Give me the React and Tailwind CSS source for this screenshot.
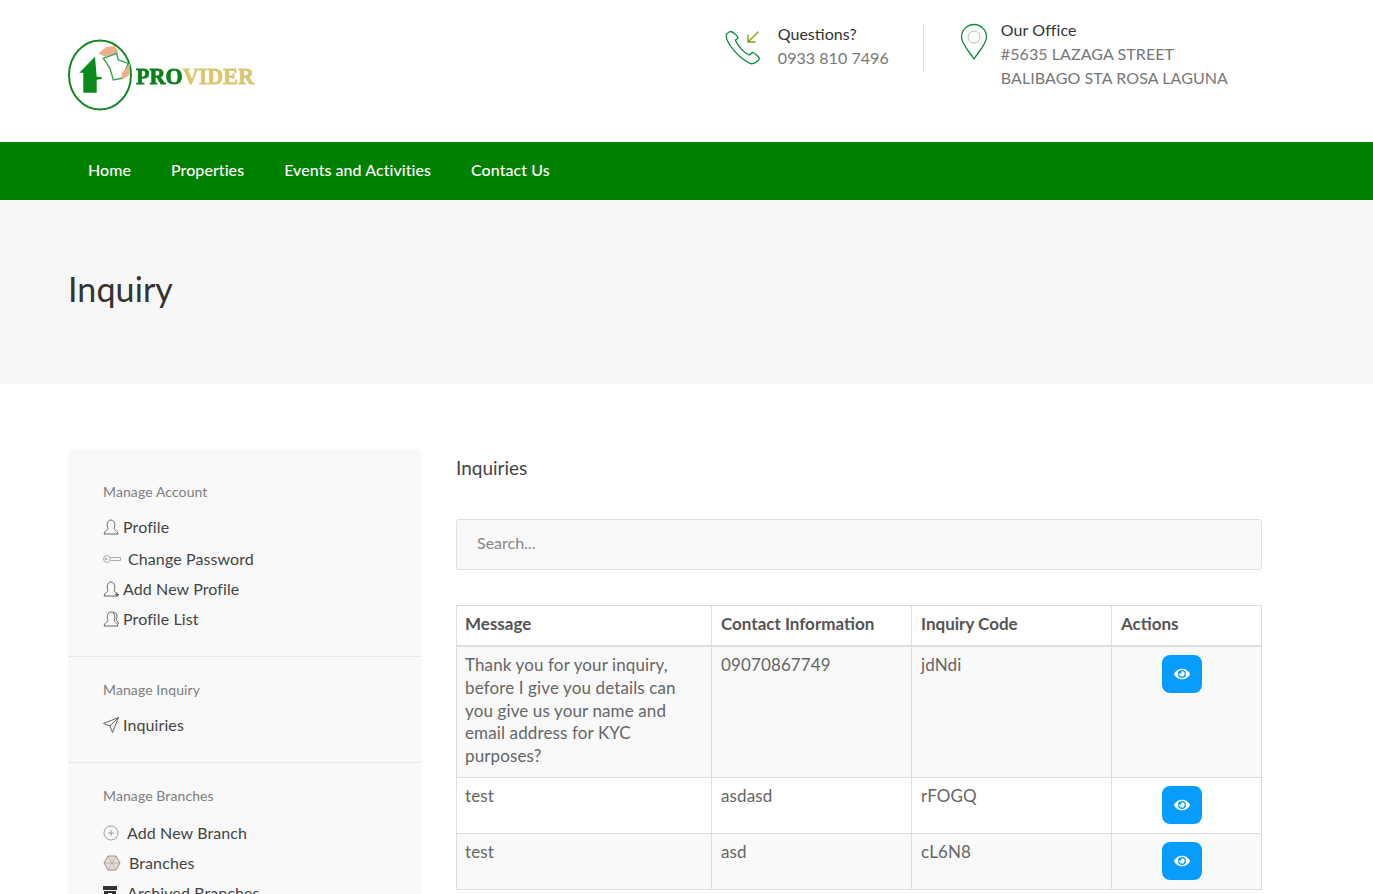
import { FaEye } from "react-icons/fa";

const font = { fontFamily: '"Lato", "Noto Sans", sans-serif' };

function Logo() {
  return (
    <svg width="200" height="76" viewBox="0 0 200 76" className="blur-[0.35px]">
      <ellipse cx="32" cy="38" rx="31" ry="34.5" fill="#fff" stroke="#12871f" strokeWidth="2" />
      <path d="M27 19.7 L11.3 35.7 H15.3 V55.7 H28.7 V42.7 L33.7 42 V40 L28.7 39.7 Z" fill="#0b8a1c" />
      <path d="M30.3 16.3 L38.7 9.7 L47 9 L50.3 14.7 L37 19.7 Z" fill="#e9b08c" />
      <path d="M35.3 21.3 L48.7 16.3 L50.3 23 L60.3 26.3 L53.7 41.3 L45.3 43 L42 31.3 Z" fill="#fff" stroke="#3fa34d" strokeWidth="1.4" />
      <path d="M53.7 36.3 L62 26.3 L61.3 38 L53.7 43 Z" fill="#e9b08c" />
      <text x="68" y="47" fontFamily="'Liberation Serif', serif" fontWeight="700" fontSize="24" textLength="118" lengthAdjust="spacingAndGlyphs" strokeWidth="0.8">
        <tspan fill="#0b7f1a" stroke="#0b7f1a">PRO</tspan>
        <tspan fill="#d9c872" stroke="#d9c872">VIDER</tspan>
      </text>
    </svg>
  );
}

function PhoneIcon() {
  return (
    <svg width="36" height="36" viewBox="0 0 36 36" fill="none" strokeLinecap="round" strokeLinejoin="round">
      <path d="M5 1.5 C3 2.5 1 4 1 6 C2 13 12 27 25 33.5 C28 34.5 33 32 34.5 28.5 C34 27 30 23.5 28 22.5 C26.5 22.5 25.5 25 24 25 C19 23 13 16 10.5 10.5 C10.5 9.5 13 8.5 13 7.5 C12 5.5 8 1.5 5 1.5 Z" stroke="#0a8a3c" strokeWidth="1.3" />
      <path d="M33 2 L23 12 M23 5 V12 H30" stroke="#7a9e12" strokeWidth="1.3" />
    </svg>
  );
}

function PinIcon() {
  return (
    <svg width="28" height="38" viewBox="0 0 28 38" fill="none">
      <path d="M14 36 C9 28 1.5 21 1.5 14 A12.5 12.5 0 0 1 26.5 14 C26.5 21 19 28 14 36 Z" stroke="#0a8a3c" strokeWidth="1.3" />
      <circle cx="14" cy="14" r="6" stroke="#a8c8a0" strokeWidth="1" />
    </svg>
  );
}

function PersonIcon({ extra }) {
  return (
    <svg width="16" height="16" viewBox="0 0 16 16" fill="none" stroke="#555" strokeWidth="0.9">
      <path d="M5 9.5 C3.5 7 4 1 8 1 C12 1 12.5 7 11 9.5 C10.5 10.5 14.5 11.5 15 15 H1 C1.5 11.5 5.5 10.5 5 9.5 Z" />
      {extra === "plus" && <path d="M12 13.5 H16 M14 11.5 V15.5" />}
      {extra === "list" && <path d="M10 1 C14 1 15 6 13 9 C14 10 15.5 11 15.5 13" />}
    </svg>
  );
}

function KeyIcon() {
  return (
    <svg width="18" height="10" viewBox="0 0 18 10" fill="none" stroke="#999" strokeWidth="0.8">
      <circle cx="4" cy="5" r="3.5" />
      <circle cx="3" cy="5" r="1" />
      <path d="M7.5 3.5 H17.5 V6.5 H7.5" />
    </svg>
  );
}

function SendIcon() {
  return (
    <svg width="16" height="16" viewBox="0 0 16 16" fill="none" stroke="#555" strokeWidth="0.9" strokeLinejoin="round">
      <path d="M15.5 0.5 L0.5 6.5 L7 9 L9.5 15.5 Z M15.5 0.5 L7 9" />
    </svg>
  );
}

function PlusCircle() {
  return (
    <svg width="16" height="16" viewBox="0 0 16 16" fill="none" stroke="#888" strokeWidth="0.8">
      <circle cx="8" cy="8" r="7" />
      <path d="M8 5 V11 M5 8 H11" />
    </svg>
  );
}

function HexIcon() {
  return (
    <svg width="18" height="16" viewBox="0 0 18 16" fill="#e8dcd8" stroke="#8a7a78" strokeWidth="0.8">
      <path d="M5 1 H13 L17 8 L13 15 H5 L1 8 Z" />
      <path d="M5 1 L13 15 M13 1 L5 15 M1 8 H17" strokeWidth="0.4" />
    </svg>
  );
}

function ArchiveIcon() {
  return (
    <svg width="14" height="14" viewBox="0 0 14 14" fill="#333">
      <path d="M0 0 H14 V4 H0 Z M1 5 H13 V14 H1 Z" />
      <path d="M5 7 H9 V8.5 H5 Z" fill="#fff" />
    </svg>
  );
}

function SideItem({ icon, gap, label, className }) {
  return (
    <div className={`flex items-center text-[16px] leading-[22px] tracking-[0.1px] text-[#444] ${className}`}>
      <span className={`flex justify-start ${gap}`}>{icon}</span>
      {label}
    </div>
  );
}

function SideHeading({ children }) {
  return <div className="text-[14px] leading-[18px] tracking-[0.1px] text-[#7e7e7e]">{children}</div>;
}

function Sidebar() {
  return (
    <aside className="w-[353px] shrink-0 bg-[#f9f9f9] rounded-t-[4px]">
      <section className="pt-[34px] pb-[26px] pl-[35px] border-b border-[#e8e8e8]">
        <SideHeading>Manage Account</SideHeading>
        <SideItem className="mt-[15px]" gap="w-[20px]" icon={<PersonIcon />} label="Profile" />
        <SideItem className="mt-[10px]" gap="w-[25px]" icon={<KeyIcon />} label="Change Password" />
        <SideItem className="mt-[8px]" gap="w-[20px]" icon={<PersonIcon extra="plus" />} label="Add New Profile" />
        <SideItem className="mt-[8px]" gap="w-[20px]" icon={<PersonIcon extra="list" />} label="Profile List" />
      </section>
      <section className="pt-[24px] pb-[26px] pl-[35px] border-b border-[#e8e8e8]">
        <SideHeading>Manage Inquiry</SideHeading>
        <SideItem className="mt-[15px]" gap="w-[20px]" icon={<SendIcon />} label="Inquiries" />
      </section>
      <section className="pt-[24px] pl-[35px] pb-[30px]">
        <SideHeading>Manage Branches</SideHeading>
        <SideItem className="mt-[17px]" gap="w-[24px]" icon={<PlusCircle />} label="Add New Branch" />
        <SideItem className="mt-[8px]" gap="w-[26px]" icon={<HexIcon />} label="Branches" />
        <SideItem className="mt-[8px]" gap="w-[24px]" icon={<ArchiveIcon />} label="Archived Branches" />
      </section>
    </aside>
  );
}

const rows = [
  {
    message: "Thank you for your inquiry, before I give you details can you give us your name and email address for KYC purposes?",
    contact: "09070867749",
    code: "jdNdi",
  },
  { message: "test", contact: "asdasd", code: "rFOGQ" },
  { message: "test", contact: "asd", code: "cL6N8" },
];

function InquiryTable() {
  return (
    <table className="w-full table-fixed border-collapse text-[17px] leading-[22.86px] tracking-[0.12px] text-[#666]">
      <colgroup>
        <col className="w-[255px]" />
        <col className="w-[200px]" />
        <col className="w-[200px]" />
        <col className="w-[150px]" />
      </colgroup>
      <thead>
        <tr className="text-left tracking-normal text-[#555]">
          {["Message", "Contact Information", "Inquiry Code", "Actions"].map((h, i) => (
            <th key={h} className={`border border-b-2 border-[#ddd] pt-[7px] pb-[9px] font-bold ${i === 0 ? "px-[8px]" : "px-[9px]"}`}>{h}</th>
          ))}
        </tr>
      </thead>
      <tbody>
        {rows.map((r, i) => (
          <tr key={i} className={i % 2 === 0 ? "bg-[#f9f9f9]" : "bg-white"}>
            <td className="border border-[#ddd] px-[8px] pt-[7px] pb-[9px] align-top">{r.message}</td>
            <td className="border border-[#ddd] px-[9px] pt-[7px] pb-[9px] align-top">{r.contact}</td>
            <td className="border border-[#ddd] px-[9px] pt-[7px] pb-[9px] align-top">{r.code}</td>
            <td className="border border-[#ddd] px-[9px] pt-[8px] pb-[9px] align-top">
              <button className="ml-[41px] flex h-[38px] w-[40px] items-center justify-center rounded-[8px] bg-[#069dff] text-white">
                <FaEye size={16} />
              </button>
            </td>
          </tr>
        ))}
      </tbody>
    </table>
  );
}

export default function App() {
  return (
    <div className="h-[894px] overflow-hidden bg-white" style={font}>
      {/* Header */}
      <header className="flex h-[142px] px-[68px]">
        <div className="pt-[37px]"><Logo /></div>
        <div className="ml-auto mr-[77px] flex items-start pt-[23px]">
          <div className="mt-[1px] flex h-[47px] w-[199px] items-start border-r border-[#e0e0e0]">
            <span className="mt-[6px] w-[53px] shrink-0"><PhoneIcon /></span>
            <div className="-mt-[1px] whitespace-nowrap">
              <div className="text-[16px] leading-[22px] text-[#333]">Questions?</div>
              <div className="mt-[1px] text-[16px] leading-[24px] tracking-[0.05px] text-[#777]">0933 810 7496</div>
            </div>
          </div>
          <div className="ml-[36px] -mt-[5px] flex items-start">
            <span className="mt-[5px] w-[41px] shrink-0"><PinIcon /></span>
            <div className="text-[16px] leading-[24px] tracking-[0.08px] text-[#777]">
              <div className="text-[#333]">Our Office</div>
              <div>#5635 LAZAGA STREET</div>
              <div>BALIBAGO STA ROSA LAGUNA</div>
            </div>
          </div>
        </div>
      </header>

      {/* Nav */}
      <nav className="flex h-[58px] items-center gap-[40px] bg-[#008000] pb-[2px] pl-[88px] text-[16px] font-medium tracking-[0.05px] text-white">
        <a>Home</a>
        <a>Properties</a>
        <a>Events and Activities</a>
        <a>Contact Us</a>
      </nav>

      {/* Title band */}
      <div className="h-[184px] bg-[#f7f7f7] px-[68px] pt-[67px]">
        <h1 className="text-[34px] leading-[44px] tracking-[0.1px] text-[#333]">Inquiry</h1>
      </div>

      {/* Main Content */}
      <div className="flex items-start gap-[35px] pl-[68px] pr-[111px] pt-[65px]">
        <Sidebar />
        <main className="min-w-0 flex-1">
          <h2 className="text-[19px] leading-[38px] text-[#444]">Inquiries</h2>
          <input
            placeholder="Search..."
            className="mt-[32px] block h-[51px] w-full rounded-[3px] border border-[#e0e0e0] bg-[#f9f9f9] px-[20px] pb-[4px] text-[16px] text-[#666] placeholder:text-[#888]"
          />
          <div className="mt-[35px]"><InquiryTable /></div>
        </main>
      </div>
    </div>
  );
}
